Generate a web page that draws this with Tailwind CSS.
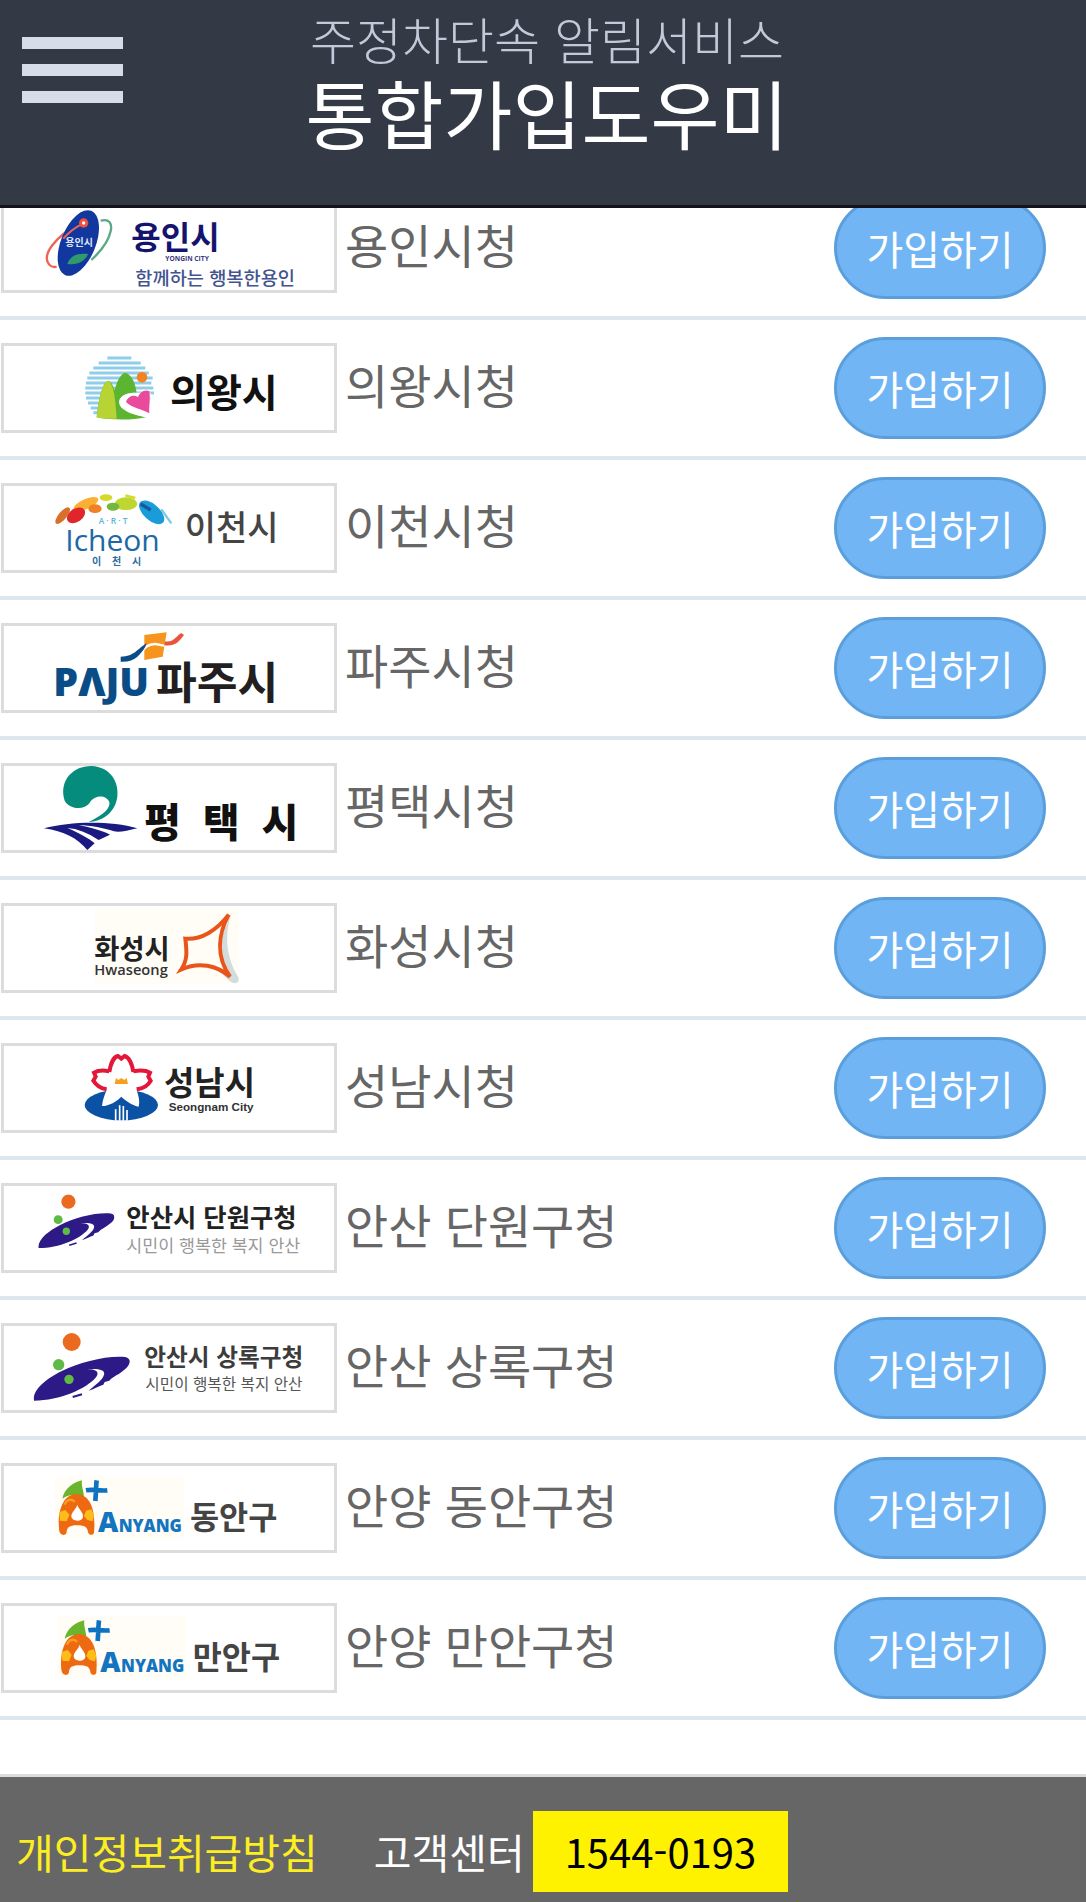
<!DOCTYPE html>
<html lang="ko">
	<head>
		<meta charset="UTF-8" />
		<meta name="viewport" content="width=device-width, initial-scale=1" />
		<title>주정차단속 알림서비스 통합가입도우미</title>
		<script src="https://cdn.jsdelivr.net/npm/@tailwindcss/browser@4"></script>
	</head>
	<body class="bg-white font-['Noto_Sans_CJK_KR',sans-serif]">
		<header
			class="fixed inset-x-0 top-0 z-10 h-52 bg-[#333a46] border-b-3 border-[#14121a] text-center"
		>
			<button aria-label="메뉴" class="absolute left-[22px] top-[37px] flex flex-col gap-[15px]">
				<span class="block w-[101px] h-3 bg-[#d7dde8]"></span>
				<span class="block w-[101px] h-3 bg-[#d7dde8]"></span>
				<span class="block w-[101px] h-3 bg-[#d7dde8]"></span>
			</button>
			<h1 class="pt-1 pl-2">
				<span class="block text-[50px] leading-[68px] font-light text-[#c2c9d8]">주정차단속 알림서비스</span>
				<span class="block text-[75px] leading-20 text-white">통합가입도우미</span>
			</h1>
		</header>

		<main class="pt-[180px] pb-[54px]">
			<ul id="cityList"></ul>
		</main>

		<footer
			class="flex items-center bg-[#666] border-t-3 border-[#dcdcdc] pt-[34px] pb-[10px] pl-4 text-[41px] leading-[81px]"
		>
			<a href="#privacy" class="text-[#fcee21]">개인정보취급방침</a>
			<span class="ml-14 text-white">고객센터</span>
			<a href="tel:1544-0193" class="ml-2 px-8 bg-[#fff200] text-black text-[40px]">1544-0193</a>
		</footer>

		<!-- marks used by more than one logo -->
		<svg class="hidden">
			<symbol id="anyang" viewBox="0 0 990 252">
				<rect x="153" y="32" width="386" height="186" fill="#fffdf6" />
				<path d="M175 98C180 70 208 48 234 43C231 62 241 78 240 98C222 82 192 84 175 98Z" fill="#6ab52c" />
				<path
					d="M166 196C160 155 168 85 218 84C267 86 275 150 270 200C266 210 254 208 252 198C250 182 240 178 218 178C197 178 189 184 188 198C187 210 169 210 166 196Z"
					fill="#ee6a12"
				/>
				<path d="M220 116C224 130 238 138 237 152C235 168 203 168 202 151C202 138 216 130 220 116Z" fill="#fff" />
				<path d="M166 138L184 132L196 146L188 166L168 164Z" fill="#fdbd18" />
				<path d="M246 134L262 130L270 148L266 166L250 162L240 150Z" fill="#fdbd18" />
				<path d="M182 116C188 98 206 98 212 108" fill="none" stroke="#f9a01b" stroke-width="7" />
				<path d="M278 43C276 56 277 66 274 105M246 73C270 68 284 76 310 73" fill="none" stroke="#0d72c0" stroke-width="14" />
				<text x="282" y="199" class="font-['Open_Sans'] font-extrabold" fill="#1374bf" font-size="84">A</text>
				<text x="344" y="199" class="font-['Open_Sans'] font-extrabold" fill="#1374bf" font-size="50">NYANG</text>
			</symbol>
			<symbol id="ansan" viewBox="0 0 290 210">
				<path
					d="M2 204C-4 172 40 138 84 116C140 88 220 68 276 73C296 77 292 98 272 112C258 126 240 130 228 144L214 148L210 156C196 160 184 168 166 174C176 164 194 152 206 138C222 116 210 106 160 110C188 108 200 118 188 134C160 168 80 204 2 204Z"
					fill="#2e1a86"
				/>
				<path d="M118 193L146 185" stroke="#2e1a86" stroke-width="6" />
				<circle cx="115" cy="28" r="27" fill="#ea6a20" />
				<circle cx="76" cy="96" r="17" fill="#5dbb46" />
				<circle cx="107" cy="140" r="14" fill="#5dbb46" />
			</symbol>
		</svg>

		<script>
			const cities = [
				{
					name: '용인시청',
					logo: `
					<path d="M232 52C150 90 112 150 136 176C142 184 150 184 158 182" fill="none" stroke="#ee6558" stroke-width="7" />
					<path d="M290 44C340 30 330 100 262 162" fill="none" stroke="#5aa98a" stroke-width="7" />
					<ellipse cx="223" cy="111" rx="52" ry="104" transform="rotate(22 223 111)" fill="#1238a0" />
					<path d="M178 98C196 76 214 64 238 52" fill="none" stroke="#ee6558" stroke-width="6" />
					<circle cx="239" cy="51" r="14" fill="#f0503c" />
					<circle cx="239" cy="51" r="5" fill="#fff" />
					<path d="M190 174C200 146 226 140 252 144C244 166 220 178 190 174Z" fill="#2f9a6e" />
					<text x="184" y="119" font-size="30" class="font-bold" fill="#dfe6f8">용인시</text>
					<text x="382" y="130" font-size="96" class="font-bold" fill="#14146e">용인시</text>
					<text x="484" y="164" font-size="20" class="font-['Open_Sans'] font-bold" fill="#3a3a80">YONGIN CITY</text>
					<text x="394" y="236" font-size="56" class="font-medium" fill="#44548f">함께하는 행복한용인</text>`,
				},
				{
					name: '의왕시청',
					logo: `
					<path
						d="M310 36H382M284 51H410M268 66H424M256 81H434M250 96H446M246 111H442M244 126H448M244 141H450M246 156H440M252 171H300M260 186H300M268 200H300"
						stroke="#8fcdea" stroke-width="9"
					/>
					<path d="M278 214C286 150 296 106 314 104C326 110 328 126 332 132C340 100 352 82 364 80C384 86 394 112 398 140C350 140 336 166 360 186C380 202 410 208 426 214C380 224 320 222 278 214Z" fill="#5cb531" />
					<path d="M278 214C286 150 296 106 314 104C330 116 334 160 338 218Q300 220 278 214Z" fill="#b7d334" />
					<path d="M398 140C350 138 332 166 356 188C376 204 406 210 430 214L438 200L440 140Z" fill="#fff" />
					<path d="M366 168C374 148 392 146 402 154C406 138 424 128 436 136C440 160 434 184 436 202C412 188 384 186 366 168Z" fill="#ea4a9c" />
					<circle cx="414" cy="94" r="16" fill="#f58220" />
					<text x="498" y="182" font-size="117" class="font-bold" fill="#111">의왕시</text>`,
				},
				{
					name: '이천시청',
					logo: `
					<ellipse cx="176" cy="89" rx="31" ry="12" transform="rotate(-50 176 89)" fill="#d9702a" />
					<ellipse cx="246" cy="54" rx="40" ry="15" transform="rotate(-24 246 54)" fill="#fbb034" />
					<ellipse cx="216" cy="88" rx="30" ry="20" transform="rotate(-35 216 88)" fill="#e0262b" />
					<ellipse cx="273" cy="68" rx="20" ry="13" fill="#f08226" />
					<ellipse cx="306" cy="35" rx="19" ry="10" fill="#d4da2a" />
					<ellipse cx="366" cy="53" rx="34" ry="19" fill="#bdd630" />
					<ellipse cx="327" cy="62" rx="19" ry="12" fill="#76b83f" />
					<path d="M364 28L394 36" stroke="#d4da2a" stroke-width="7" />
					<ellipse cx="443" cy="79" rx="46" ry="24" transform="rotate(42 443 79)" fill="#1a9cd8" />
					<path d="M410 54L440 72" stroke="#16599c" stroke-width="10" />
					<path d="M472 70L502 112" stroke="#7cc7ea" stroke-width="7" />
					<text x="284" y="115" font-size="25" class="font-['Open_Sans'] font-semibold" fill="#5ab4dc">A · R · T</text>
					<text x="184" y="196" font-size="90" class="font-['Open_Sans'] font-medium" fill="#1d68a6">Icheon</text>
					<text x="264" y="236" font-size="30" class="font-bold" fill="#2f6c9c">이</text>
					<text x="324" y="236" font-size="30" class="font-bold" fill="#2f6c9c">천</text>
					<text x="384" y="236" font-size="30" class="font-bold" fill="#2f6c9c">시</text>
					<text x="542" y="162" font-size="102" class="font-medium" fill="#444">이천시</text>`,
				},
				{
					name: '파주시청',
					logo: `
					<path d="M421 27L488 19L476 92L421 102Z" fill="#f7941d" />
					<path d="M408 86C420 62 436 54 452 54C466 54 476 62 488 58" fill="none" stroke="#fff" stroke-width="7" />
					<path d="M350 92V107C392 110 410 84 424 62L428 52C402 66 392 92 350 92Z" fill="#0a4c85" />
					<path d="M484 46C508 50 514 32 532 21L540 27C526 46 514 62 480 58Z" fill="#e8553b" />
					<text x="148" y="210" font-size="118" class="font-['Open_Sans'] font-extrabold" fill="#0a4c85">PΛJU</text>
					<text x="456" y="218" font-size="133" class="font-bold" fill="#231f20">파주시</text>`,
				},
				{
					name: '평택시청',
					logo: `
					<path d="M254 168C300 146 320 126 316 108C308 86 270 84 256 112C240 134 196 130 182 104C164 44 206 0 262 0C320 2 346 50 340 92C334 134 304 164 254 168Z" fill="#058c7c" />
					<path d="M120 187C200 166 320 164 400 187C370 194 346 200 330 196C300 186 260 178 224 178C260 184 300 196 318 206L284 222C250 200 220 188 190 186C224 200 256 218 272 232L250 252C220 216 180 196 120 187Z" fill="#1a1a80" />
					<text x="421" y="213" font-size="119" class="font-black" fill="#111">평&nbsp;&nbsp;택&nbsp;&nbsp;시</text>`,
				},
				{
					name: '화성시청',
					logo: `
					<rect x="273" y="10" width="432" height="225" fill="#fffdf6" />
					<path d="M686 12C660 80 664 150 704 216C706 234 690 236 676 224L640 190L650 100Z" fill="#d3dcdc" />
					<path d="M674 26C644 82 634 150 678 212C638 178 586 166 532 190C552 160 548 134 544 98C590 102 638 74 674 26Z" fill="#fffdf6" stroke="#e8541a" stroke-width="12" />
					<text x="271" y="159" font-size="82" class="font-bold" fill="#222">화성시</text>
					<text x="271" y="207" font-size="44" class="font-['Open_Sans'] font-semibold" fill="#333">Hwaseong</text>`,
				},
				{
					name: '성남시청',
					logo: `
					<ellipse cx="352" cy="177" rx="110" ry="46" fill="#0b52a4" />
					<path
						d="M316 72C322 50 328 32 340 28L352 36L364 28C376 32 384 50 390 72C412 68 432 72 440 78L436 92L442 104C432 122 416 130 398 132C404 150 408 166 404 182C386 178 366 166 352 152C338 166 316 180 294 180C296 162 302 146 308 132C290 130 272 120 266 104L272 92L268 78C280 70 298 68 316 72Z"
						fill="#fff"
					/>
					<path
						d="M316 78C320 52 330 32 342 30L352 38L362 30C376 34 384 54 388 78M316 76C298 72 280 74 270 80L275 92L268 104C278 120 292 128 308 130M388 76C410 72 428 74 438 80L433 92L440 104C430 122 414 128 398 130"
						fill="none" stroke="#e2173a" stroke-width="12"
					/>
					<path d="M332 114L336 96L343 102L352 96L361 102L368 96L372 114Z" fill="#f6a11c" />
					<path d="M335 224V190M347 224V178M358 224V180M369 224V192" stroke="#fff" stroke-width="5" />
					<text x="480" y="146" font-size="99" class="font-bold" fill="#222">성남시</text>
					<text x="494" y="194" font-size="35" class="font-['Liberation_Sans'] font-bold" fill="#333">Seongnam City</text>`,
				},
				{
					name: '안산 단원구청',
					logo: `
					<use href="#ansan" x="102" y="25" width="230" height="166" />
					<text x="367" y="122" font-size="76" class="font-bold" fill="#222">안산시 단원구청</text>
					<text x="367" y="198" font-size="52" fill="#999">시민이 행복한 복지 안산</text>`,
				},
				{
					name: '안산 상록구청',
					logo: `
					<use href="#ansan" x="88" y="20" width="290" height="210" />
					<text x="421" y="121" font-size="71" class="font-bold" fill="#3c3c3c">안산시 상록구청</text>
					<text x="424" y="193" font-size="47" fill="#555">시민이 행복한 복지 안산</text>`,
				},
				{
					name: '안양 동안구청',
					logo: `
					<use href="#anyang" width="990" height="252" />
					<text x="558" y="189" font-size="95" class="font-bold" fill="#444">동안구</text>`,
				},
				{
					name: '안양 만안구청',
					logo: `
					<use href="#anyang" x="7" width="990" height="252" />
					<text x="566" y="189" font-size="95" class="font-bold" fill="#444">만안구</text>`,
				},
			];

			document.getElementById('cityList').innerHTML = cities
				.map(
					(city) => `
				<li class="flex items-center h-35 pl-px pr-10 border-b-4 border-[#dde7ed]">
					<svg viewBox="0 0 990 252" role="img" aria-label="${city.name}" class="shrink-0 w-84 h-[90px] border-3 border-[#dcdcdc]">${city.logo}</svg>
					<span class="ml-2 flex-1 pb-2 text-[47px] leading-[72px] text-[#666]">${city.name}</span>
					<button class="w-[212px] h-[102px] rounded-full border-3 border-[#5a9fdc] bg-[#71b5f4] text-[40px] text-white">가입하기</button>
				</li>`
				)
				.join('');
		</script>
	</body>
</html>
